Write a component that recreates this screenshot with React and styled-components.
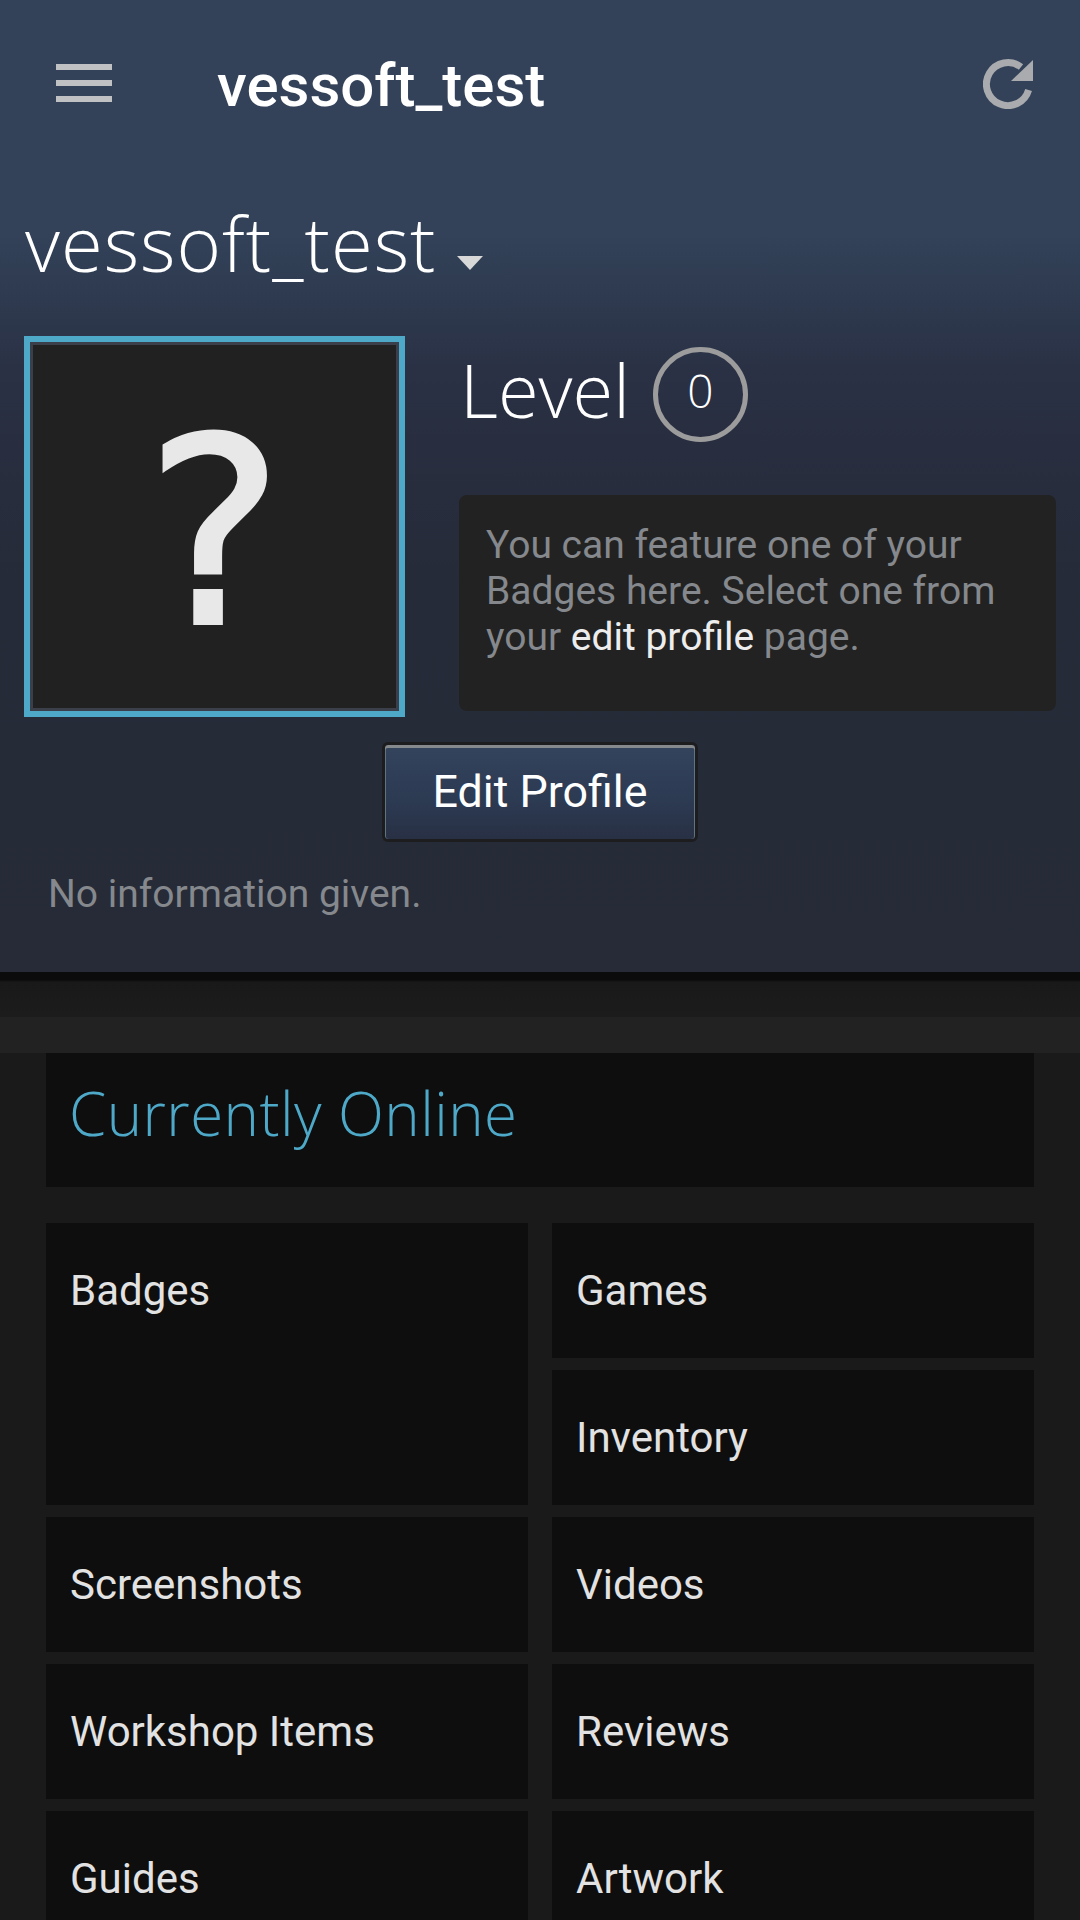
import React from "react";
import styled, { createGlobalStyle } from "styled-components";

const Global = createGlobalStyle`
  html, body { margin: 0; padding: 0; background: #1a1a1a; }
  body { font-family: Roboto, "Liberation Sans", sans-serif; }
  * { box-sizing: border-box; }
`;

const Page = styled.div`
  width: 1080px;
  height: 1920px;
  overflow: hidden;
  background: #1a1a1b;
`;

const Hero = styled.header`
  height: 972px;
  padding: 0 24px 0 24px;
  background: linear-gradient(180deg, #334259 0%, #334259 24%, #2f3c52 29%, #2a3145 38%, #282e3f 46%, #262b39 60%, #262b37 100%);
`;

const Toolbar = styled.div`
  height: 168px;
  display: flex;
  align-items: center;
  margin: 0 -24px;
  padding: 0 47px 0 56px;
`;

const Burger = styled.div`
  width: 56px;
  display: flex;
  flex-direction: column;
  gap: 10px;
  margin-bottom: 2px;
`;

const BurgerBar = styled.span`
  display: block;
  height: 6px;
  background: #bfc1c3;
`;

const ToolbarTitle = styled.h1`
  flex: 1;
  margin: 3px 0 0 105px;
  font: 500 60px/1 Roboto, sans-serif;
  color: #fff;
`;

const RefreshIcon = styled.svg`
  display: block;
  width: 50px;
  height: 50px;
`;

const NameRow = styled.div`
  height: 76px;
  margin-top: 37px;
  display: flex;
  align-items: center;
`;

const PersonaName = styled.h2`
  margin: 0 0 0 1px;
  font: 300 76px/76px "Open Sans", sans-serif;
  letter-spacing: 1px;
  color: #fff;
`;

const Caret = styled.span`
  width: 0;
  height: 0;
  margin: 40px 0 0 21px;
  border-left: 13.5px solid transparent;
  border-right: 13.5px solid transparent;
  border-top: 14px solid #d8d8d8;
`;

const Summary = styled.div`
  margin-top: 55px;
  display: flex;
  align-items: flex-start;
  gap: 54px;
`;

const Avatar = styled.div`
  flex: none;
  width: 381px;
  height: 381px;
  border: 6px solid #4ea9c9;
  background: #212121;
  box-shadow: inset 0 0 0 3px #3a3f4a;
  display: flex;
  align-items: center;
  justify-content: center;
`;

const AvatarMark = styled.span`
  margin-top: 14px;
  font: 400 258px/1 "DejaVu Sans", sans-serif;
  -webkit-text-stroke: 4px #e8e8e8;
  color: #e8e8e8;
`;

const SideColumn = styled.div`
  flex: 1;
  min-width: 0;
`;

const LevelRow = styled.div`
  height: 106px;
  margin-top: 5px;
  display: flex;
  align-items: center;
  gap: 23px;
`;

const LevelLabel = styled.span`
  margin: -8px 0 0 1px;
  font: 300 74px/1 "Open Sans", sans-serif;
  color: #fff;
`;

const LevelCircle = styled.span`
  width: 95px;
  height: 95px;
  border: 5px solid #9c9c9c;
  border-radius: 50%;
  display: flex;
  align-items: center;
  justify-content: center;
  padding-bottom: 8px;
  font: 300 46px/1 "Open Sans", sans-serif;
  color: #fff;
`;

const ShowcaseNote = styled.div`
  width: 597px;
  height: 216px;
  margin: 48px 0 0 0;
  padding: 27px 27px 0;
  background: #222;
  border-radius: 8px;
  font: 400 39px/46px Roboto, sans-serif;
  color: #85888c;
`;

const NoteLink = styled.span`
  color: #ededed;
`;

const ButtonRow = styled.div`
  margin-top: 25px;
  display: flex;
  justify-content: center;
`;

const EditButton = styled.div`
  width: 316px;
  height: 100px;
  border: 3px solid #1d1d1f;
  border-radius: 6px;
  background: linear-gradient(180deg, #33445c 0%, #2c3a52 60%, #283044 100%);
  box-shadow: inset 0 3px 0 #85898c, inset 1px 0 0 #5e7480, inset -1px 0 0 #5e7480;
  display: flex;
  align-items: center;
  justify-content: center;
  font: 400 44.8px/1 Roboto, sans-serif;
  color: #fff;
`;

const Bio = styled.p`
  margin: 29px 0 0 24px;
  font: 400 39px/46px Roboto, sans-serif;
  color: #85888c;
`;

const Divider = styled.div`
  height: 45px;
  background: linear-gradient(180deg, #0b0b0b 0, #0b0b0b 8px, #191919 10px, #1c1c1c 100%);
`;

const Band = styled.div`
  height: 36px;
  background: #222223;
`;

const Content = styled.main`
  padding: 0 46px;
  display: flex;
  flex-direction: column;
  gap: 36px;
`;

const Status = styled.div`
  height: 134px;
  padding: 15px 23px 0;
  background: #0e0e0e;
  font: 300 60px/90px "Open Sans", sans-serif;
  letter-spacing: 0.45px;
  color: #4ea9c9;
`;

const Tiles = styled.div`
  display: grid;
  grid-template-columns: 482px 482px;
  grid-auto-rows: 135px;
  column-gap: 24px;
  row-gap: 12px;
`;

const Tile = styled.div`
  grid-row: ${p => (p.$tall ? "span 2" : "auto")};
  padding: 0 24px;
  height: ${p => (p.$tall ? "282px" : "135px")};
  background: #0e0e0e;
  font: 400 42px/135px Roboto, sans-serif;
  color: #e2e2e2;
`;

const items = [
  { label: "Badges", tall: true },
  { label: "Games" },
  { label: "Inventory" },
  { label: "Screenshots" },
  { label: "Videos" },
  { label: "Workshop Items" },
  { label: "Reviews" },
  { label: "Guides" },
  { label: "Artwork" },
];

export default function App() {
  return (
    <Page>
      <Global />
      <Hero>
        <Toolbar>
          <Burger>
            <BurgerBar />
            <BurgerBar />
            <BurgerBar />
          </Burger>
          <ToolbarTitle>vessoft_test</ToolbarTitle>
          <RefreshIcon viewBox="0 0 50 50">
            <path d="M38 8 A21.5 21.5 0 1 0 45.6 31" fill="none" stroke="#a9abae" strokeWidth="7" />
            <polygon points="50,1 50,22 28,22" fill="#a9abae" />
          </RefreshIcon>
        </Toolbar>
        <NameRow>
          <PersonaName>vessoft_test</PersonaName>
          <Caret />
        </NameRow>
        <Summary>
          <Avatar>
            <AvatarMark>?</AvatarMark>
          </Avatar>
          <SideColumn>
            <LevelRow>
              <LevelLabel>Level</LevelLabel>
              <LevelCircle>0</LevelCircle>
            </LevelRow>
            <ShowcaseNote>
              You can feature one of your Badges here. Select one from your <NoteLink>edit profile</NoteLink> page.
            </ShowcaseNote>
          </SideColumn>
        </Summary>
        <ButtonRow>
          <EditButton>Edit Profile</EditButton>
        </ButtonRow>
        <Bio>No information given.</Bio>
      </Hero>
      <Divider />
      <Band />
      <Content>
        <Status>Currently Online</Status>
        <Tiles>
          {items.map(i => (
            <Tile key={i.label} $tall={i.tall}>{i.label}</Tile>
          ))}
        </Tiles>
      </Content>
    </Page>
  );
}
